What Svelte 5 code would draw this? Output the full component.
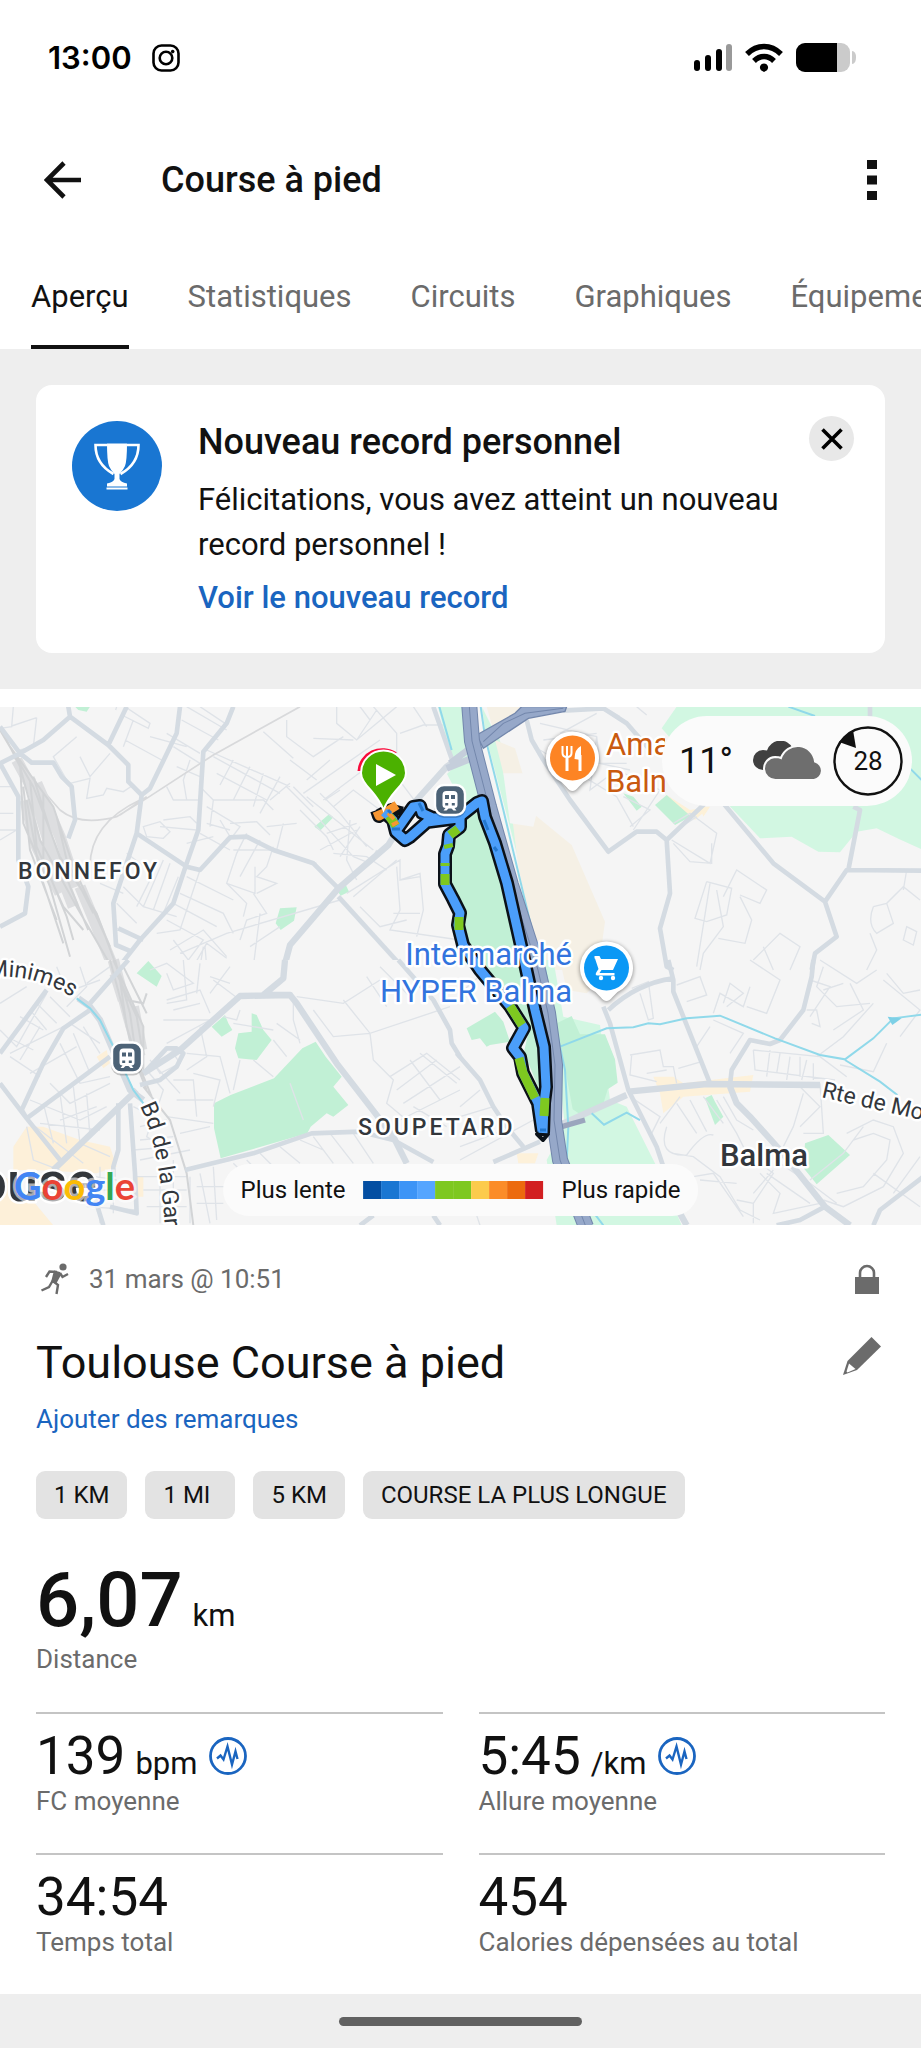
<script lang="ts">
    const tabs = ["Aperçu", "Statistiques", "Circuits", "Graphiques", "Équipement"];
    let activeTab = "Aperçu";
    let showRecord = true;

    const badges = ["1 KM", "1 MI", "5 KM", "COURSE LA PLUS LONGUE"];

    const stats = [
        { value: "139", unit: "bpm", label: "FC moyenne", chart: true },
        { value: "5:45", unit: "/km", label: "Allure moyenne", chart: true },
        { value: "34:54", unit: "", label: "Temps total", chart: false },
        { value: "454", unit: "", label: "Calories dépensées au total", chart: false },
    ];

    const paceColors = [
        "#034ea2", "#1976d2", "#3d94f6", "#55a5ff", "#7ec820",
        "#7ec820", "#fccb4d", "#fb8c28", "#ec6a0e", "#d21f21",
    ];

    const outbound = "M384 105L393 113L396 125L405 133L410 130L427 115L458 111L477 96L482 94L485 110L495 136L507 176L522 243L535 303L544 340L546 380L544 396L543 426";
    const loop = "M396 124L413 100L420 99L422 106L433 111L460 111L460 120L449 128L448 139L445 147L445 177L453 192L460 206L458 218L463 238L480 263L510 299L524 321L513 341L520 350L523 366L538 396L542 424";

    const greenParts = [
        "M458 122L450 128", "M445 156L445 159", "M445 167L445 178", "M459 210L459 223",
        "M510 299L522 318", "M519 351L523 366L535 391", "M545 391L544 409", "M389 109L396 119",
        "M448 137L449 141",
    ];
</script>

<div class="screen">
    <header>
        <div class="status">
            <time>13:00</time>
            <svg class="insta" viewBox="0 0 28 28" aria-hidden="true">
                <rect x="1.5" y="1.5" width="25" height="25" rx="8" />
                <circle cx="14" cy="14" r="6.3" />
                <circle class="dot" cx="20.7" cy="7.6" r="1.8" />
            </svg>
            <svg class="signals" viewBox="0 0 164 30" aria-hidden="true">
                <rect x="1" y="17" width="6" height="11" rx="3" />
                <rect x="12" y="12" width="6" height="16" rx="3" />
                <rect x="23" y="6" width="6" height="22" rx="3" />
                <rect x="33" y="1" width="6" height="27" rx="3" fill="#999" />
                <path d="M54 11C64 1 78 1 88 11M61 18C67 12 75 12 81 18" fill="none" stroke="#000" stroke-width="5.4" />
                <path d="M71 20.5a4 4 0 0 1 3 6.7L71 29l-3-1.800a4 4 0 0 1 3-6.700z" />
                <rect x="103" y="0" width="54" height="29" rx="9" fill="#cbcbcb" />
                <path d="M112 0h32v29h-32a9 9 0 0 1-9-9V9a9 9 0 0 1 9-9z" />
                <path d="M159 8q4 0 4 6.500t-4 6.500z" fill="#cbcbcb" />
            </svg>
        </div>

        <div class="appbar">
            <button class="icon-btn" aria-label="Retour">
                <svg width="38" height="38" viewBox="0 0 38 38" fill="none" stroke="#111" stroke-width="4.600">
                    <path d="M37 19H4M20 2L3 19l17 17" />
                </svg>
            </button>
            <h1>Course à pied</h1>
            <button class="icon-btn more" aria-label="Plus d'options">
                <svg width="10" height="40" viewBox="0 0 10 40" fill="#111">
                    <path d="M0 0h10v9H0zM0 15.500h10v9H0zM0 31h10v9H0z" />
                </svg>
            </button>
        </div>

        <nav class="tabs">
            {#each tabs as tab}
                <button class:active={tab === activeTab} on:click={() => (activeTab = tab)}>{tab}</button>
            {/each}
        </nav>
    </header>

    <section class="notice">
        {#if showRecord}
            <div class="card">
                <svg class="trophy" viewBox="0 0 90 90" aria-hidden="true">
                    <circle cx="45" cy="45" r="45" fill="#1976d2" />
                    <path d="M35 22.500h20q0 17-2 22.500-2 4.500-5.500 8v5q1 3 7.500 4.500v3H35v-3q6.500-1.500 7.500-4.500v-5q-3.500-3.500-5.500-8-2-5.500-2-22.500zM34.500 66.500h21v2h-21z" fill="#fff" />
                    <path d="M35 24H23.500q0 19 18 29M55 24h11.500q0 19-18 29" fill="none" stroke="#fff" stroke-width="2.600" />
                </svg>
                <div class="card-text">
                    <h2>Nouveau record personnel</h2>
                    <p>Félicitations, vous avez atteint un nouveau record personnel !</p>
                    <a href="#record">Voir le nouveau record</a>
                </div>
                <button class="close" aria-label="Fermer" on:click={() => (showRecord = false)}>
                    <svg width="22" height="22" viewBox="0 0 22 22" stroke="#000" stroke-width="3.600">
                        <path d="M1.500 1.500l19 19M20.500 1.500l-19 19" />
                    </svg>
                </button>
            </div>
        {/if}
    </section>

    <section class="map">
        <svg class="tiles" viewBox="0 0 921 518" role="img" aria-label="Carte du parcours">
            <defs>
                <clipPath id="left-half"><rect y="20" width="1381" height="760" /></clipPath>
                <clipPath id="label-clip"><rect x="590" y="0" width="75" height="110" /></clipPath>
                <path id="minimes" d="M-12 270Q18 268 42 276T84 299" />
                <path id="boulevard" d="M140 399Q163 444 167 560" />
            </defs>
            <rect width="921" height="518" fill="#f5f5f5" />

            <!-- north-west -->
            <g transform="translate(0 -7) scale(.33334)" fill="none">
                <g clip-path="url(#left-half)">
                    <path class="park" d="M225 20h45l-10 15-25-5zM943 380l45-38 12 10-40 40zM1010 570l25-20 12 25-25 12zM840 625l50-3-8 40-40 28-15-20zM420 800l20-16 25 20v10h-45z" />
                    <path class="minor" d="M40 20L35 80 0 85M35 78l75-25M350 20l-3 10M375 20l75 50-5 15-80-40M400 60L370 140M375 120l110 60M450 110l110 30M500 100l100 60M530 200l70 30M560 20l120 70M600 20l75 50M545 60l110 60M520 140l80 50M620 150l250 110M640 170l200 110M650 220l150 80M700 180l-40 75M750 200l-50 100M790 220l-30 100M840 230L780 340M600 260l40 40 150 0 30 30M500 260l20 40 80 0M570 180l-20 60 10 60M620 320l100 60-30 40M640 300l-10 80M860 260l90 90 110 120M880 260l60 60M920 290l200 160M900 330l80 80 20 40M960 280l60 60 80 100M970 300l120-90M1000 320l60-50 80 60M1020 270l-45 30M870 250l-60 50M1010 20v50l60 50 120-100M1080 20l30 40M1120 20l70 80v60M1070 120l60-90M860 60v50l80 60 90-60M940 115l120 5M790 95l90 80M870 180l80 60M910 280l230-160M1200 100l70-25h60M1190 100v130l60 80M1240 20l40 60M920 240l70-60M110 53L100 140 60 150M210 250l60-15-10 60 50-10 10-20 50 10 30-20M240 170l30 60 60-70M200 240l-40-70 70-60M0 260h45M0 340h40M0 420l50-30M0 390h50M380 460l80 60-50 100M400 480l-40 60M430 620l60-140M460 630l50-140M490 640l45-110M430 380l50-15 30 30-20 20-50-5zM490 360l80-10 20 20M480 380l110 10M560 430l80-20M600 400l90 50M620 370l70 20M660 360l30 50M740 400l-30 60-30 90 85 30 0-80M780 420l-60 110M820 440l-20 60-30 30 60 20-60 30M700 450l120 0M830 450l120 40M760 580l40 60-60 20-20 60M680 550l60 60-10 40M540 580l130 60 30 60M520 610l130 70M560 530l140 70M600 510l-60 180-70 10M500 660l110 60-60 80M690 370l80-5 40 40M850 370l-20 80M800 380l90-10M960 450l110-60M980 400l90-30M1000 460l100 10 60 40M1050 360l-10 120 30 60M1080 380l-60 90M1060 470l50 20 20-40M1020 600L680 700 540 760M1040 580l160-100 0 60 60-20 10 110-20 80M1060 590l130-110M1190 500l10 130-30 60 210 30M1200 540l60-10M1080 620l60 60 80-20M1180 640h80M300 550l70 30M370 560l60 60 100 30M350 610l60 60M340 680l80 40M510 750l100-60 70 80M580 800l40-70 60 45M600 800l10-60M620 800l-5-60M520 720l60 80M780 640l-20 160M840 680l-90 60" />
                    <path class="rail" d="M900 20L640 165 440 295 350 350Q240 380 180 330L40 170M420 300Q270 370 270 500M440 290L360 345" />
                    <path class="yard wide" d="M90 240L150 440 220 620M75 300L110 440 180 580M110 250L180 410 230 560M50 180L110 290M240 560L290 680 335 790" />
                    <path class="yard" d="M10 100L60 200 120 420 230 620 340 810M0 90L100 260 180 470 290 640 350 800M30 140L160 320 220 500 330 740M60 190L70 370 150 560 210 770M90 240L110 440 190 620 250 690M130 280L130 480 200 650 220 720M100 230L150 390 210 560 265 690M70 260L90 450 170 660M170 350L200 480 280 640M80 300L120 520 190 730" />
                    <path class="road" d="M0 190L60 160 130 120 210 50 205 20M210 50L325 135 385 195 385 245 425 285M325 135L380 20M0 80L60 160 95 188 160 188 185 230 215 260 225 360 205 415M0 190L55 290 55 480 85 560 75 640 0 680M540 20L530 100 450 265 425 285 410 400 340 610 348 735 395 755M410 400L560 500 600 510 690 412 740 410 820 450 940 490 1015 565M700 20L680 70 610 155 595 390 560 490 520 610 420 720 350 810M355 685L430 720" />
                    <path class="road" d="M1370 180L1340 200 1250 300 1165 435 1015 565 870 735 850 810" stroke-width="20" />
                    <path class="road" d="M1015 590L1215 810" />
                </g>
            </g>

            <!-- green belt between the canal and the motorway -->
            <path class="park pale" d="M438 0H470L492 104L462 96L447 67L454 60zM482 0l4 30 20 75 26 100 10 58h14l-17-60-22-80-14-60 3-8-8-28-6-7z" />
            <path class="park" d="M457 132L470 108 482 104 495 140 523 262 538 300 543 345 540 385 524 345 530 318 506 285 466 235 464 205 448 176 452 138z" />

            <!-- north-east -->
            <g transform="translate(460 -7) scale(.33334)" fill="none">
                <path class="park pale" d="M650 20h740v430q-70-30-140-65l-60 10-50 62-65-2-80-45-95 5-85-90-210-240z" />
                <path class="park" d="M585 315l35-30 80 60-55 30zM490 280l30 10 25 30-15 12z" />
                <path class="sand" d="M80 20h110l-90 70zM105 120l60 25 60 200 110 90 100 230-20 145H240L175 500 150 300z" />
                <path fill="#f5f5f5" d="M130 220l70 0 40 80-20 80-70-10z" />
                <path fill="#fdf1d8" d="M620 285l70 45 60-10-45 40zM720 320h30l-20 30z" />
                <path class="minor" d="M240 70l170 40 10 80 90 20M250 120l160-20M410 40l-110 60M430 20l50 30M530 20l30 25M240 150l230 140 50 90M410 110l-20 160 80-60 130 60-80 120M380 190l120 0M490 290l80 40-60 50M640 370l50-30 80 60-20 90-115-70M650 390l60-40M640 430l50 55 65 5v-60M740 545l75 20-15 80-60 20-35-10 35-110M790 590l40-80 90 60-20 40-60-25M750 550l-40 250M770 570l20 110-60 80-10 50M840 590l35 70-20 70-80-15M880 780l80-80 60 40-30 70M910 740l30 70M1240 620l40-10 50-50 50 40M1240 620q-20 50 10 80l50-30-20-60M1340 680l30 15-10 40-30-15zM1330 570l10-60M1230 700l20 50-30 60" />
                <path class="road" d="M200 60L215 120 250 180 330 300 445 455 530 395 590 395 620 420 735 310M620 420L630 580 600 685 620 800 640 810M310 32L430 25 500 70 570 150M790 310L940 490 1095 605 1160 510 1390 512M1165 510L1200 330 1180 320M1095 605L1130 710 1065 760 1055 810M-80 20L-20 190" />
                <path class="road" d="M1230 20v30" />
                <path class="water" d="M-62 20L-25 150M62 20L75 110 130 330 240 790M985 20L1065 48M1350 205l35 35" />
                <path class="ramp" d="M-30 190L30 145M-40 205L35 175" />
                <path d="M50 105L165 40 185 20H320L315 34 205 55 70 145z" fill="#96a8c9" stroke="#7387ac" stroke-width="4" />
                <path d="M70 125L130 70 195 40 310 25" stroke="#7387ac" stroke-width="3" />
            </g>

            <!-- south-west -->
            <g transform="translate(0 253) scale(.33334)" fill="none">
                <path fill="#fdf0d9" d="M80 500h50l110 40 90 20 20 60-60 20-190-10H40v-70zM0 640l80 60 80 96H0zM290 290l30-20 10 40-20 15zM400 650h30v60h-30z" />
                <path class="park" d="M410 40l35-37 40 45-15 32zM635 200l40-35 10 25 12 20-32 20zM715 220l40-5 0-55 15 5 20 45 25 30-45 60-55-5-10-30zM642 430l50-25 130-50 85-90 40-20 30 45 48 60-25 30 45 55-45 35-20-10-48 40-10 20-260 75-20-90z" />
                <path class="minor" d="M0 130l80-50M0 210l50 50 90-160M40 240l60 30M60 170l70 40M90 150l50 60M110 130l60 60M150 110l60 60M30 280l180-90M60 300l60-100M90 340l140-80M120 350l-90-60M150 370l60 60 120-60M180 250l60 120 90-20M220 220l50 120M250 200l50 80M210 190l90 60M330 20l-70 50M300 60l-110 40M240 20l20 60-60 60M170 20l20 50M80 480l170 130M90 420l150 60 80-40M120 490l180 20M130 430l30 120M180 400l20 150M220 380l20 170M260 400l10 130M290 440l-110 40M80 500l20 100 80 30M240 550l90 40M220 640l130 20M250 690l140 0M260 740l150 10M300 620v170M340 610v150M420 600l150-30M400 570l120-10M420 540l100-10M420 500l80-20M410 650h150M430 690h130M440 740h120M480 620v170M520 600v190M570 650v140M600 640l30 150M640 620l10 160M590 680h110M590 730h80M700 610l60 60M740 600l60 60M780 580l50 50M840 560l60 50M900 540l70 30M940 530l60 80M990 520l70 90M1060 520l60 90M450 30l50-20 80 60-60 20-20-50M500 120l100-30 30 70M520 150l80-20M490 180l140 0M500 250l130-70M560 280l100 10 30 110M600 200l20 90-60 40M580 340l80 20-20 80M520 360l60 0 10 110M530 420l110 0M500 470l140 20M540 520l90-20M670 170l40 10 10-30M700 190l120 20M830 190l70 50M820 240l40 50M720 300l-20 90M760 300l60 50M690 20l-60 80M640 60l80 60M880 120v60l20 70M890 110l140 20 110-70M1030 120l80 100 240-80M940 150l60 80 110-10M1100 50l60 90M1140 20l100 100M1110 220l10 80 60 60-20 70 60 50M1170 350l110-70 100 80M1190 390l120-90M1210 430l170-110M1230 300l90 120M1260 280l110 90M1200 480l180-90M1240 440l100 60M870 370l40 110" />
                <path class="minor" d="M400 440l60 30-20 60 60 40M440 330l50 60-20 60M450 300l90 100M470 320l60-60M460 310l60-30 20 30-60 30zM550 0l10 120-60 10M600 10l-10 90M630 50l60 20" />
                <path class="yard wide" d="M340 0L385 170 420 290M400 140L425 270M345 40L370 120" />
                <path class="yard" d="M330 0L370 150 400 290 440 390M345 0L390 160 410 300 455 410M350 40L410 170 430 290M370 20L420 120 440 160M360 60L380 200 420 330M340 0L430 200 430 350M380 120L430 130 440 100M430 380L510 480 560 640 580 796" />
                <path class="road" d="M0 280L140 90M270 150L190 205 130 310 65 450 80 475 180 600M0 370L80 475 330 290M270 130L385 0M555 630L760 580 935 520 1080 515 1180 540 1300 606M355 430L355 570 340 620 340 650M390 430L405 640 410 760 330 740M280 700L310 796M440 330L500 265 530 265 550 280 530 320 480 360 420 375" />
                <path class="road" d="M235 115L270 140 300 180 390 390 430 420M160 630L410 390M430 340L540 270 720 108 870 105 790 105 850 55 855 0M870 105L890 130 1010 310 1180 530 1220 610" stroke-width="20" />
                <path class="road" d="M1195 0L1300 120 1350 210 1355 250 1380 290M1080 796l40-30M1320 796l-20-30" />
                <path class="water" d="M230 115L270 145 300 180 340 260 400 390 430 430" />
            </g>

            <!-- south-east -->
            <g transform="translate(460 253) scale(.33334)" fill="none">
                <path class="park pale" d="M250 0H280L310 170 420 195 450 420 500 440 590 620 665 796H290L260 600 315 500 290 280zM0 0H60L150 110 110 60z" />
                <path class="sand" d="M300 0h140v40l-60 60-60-10z" />
                <path class="park" d="M20 205l85-50 25 30 20 60-60 10-10 5-20-25-25 5zM290 190l45-22 25 55 75 0 30 75 8 70-30 20-15 50-60 30-30-20z" />
                <path class="park" d="M735 415l20-10 10 20 25 45-25 25zM1035 550l70-25 65 60-100 88-40-50z" />
                <path fill="#fdf1da" d="M580 350l60 0 30 20 210-25-10 50-200 15-60 50-10-60zM170 580h65l-10 30h-50z" />
                <path class="minor" d="M510 285l90-15 10 50 30 0 10 50M515 285l-5 60 80 20M655 325l70-20 10 40M560 340l60-10M515 85l50-20 15 110-15 5-25-80M650 75l70-25 20 55-60 20M790 130l20-60 40 30-50 40M760 160l20-60 70 40 20-60M870 0l90 60-40 100-60-20M1050 60l60 20-60 90M1040 150l30 0 10 50-25-10M1080 0l110 70 60-40M1090 90l60-20M1090 20l-20 60 60 60 100-10M1240 130l-90 100-80 60M1270 60l110 90-60 80M1280 40l50 60 50-10M1280 250l-40 85-100-20M1170 70l40 80-90 60M760 180l90 40-40 60M750 200l-40 60M880 270l5 60 240 30M930 270l-10 80M960 280l-10 60M990 290l-10 70M1020 290v60M1040 300l-15 60M1060 310l0 50M880 270l200 20 80 60M1020 380l60 60-60 60M1030 400l-30 100-30 60M1080 370l10 150-60 0M510 410l90 60-30 60M600 490l60-80M620 500q-30 90 60 85 50-70 80-60M650 430l60 90M690 420l50 95M730 410l60 80M790 410l40 70 50 30M770 420l60 100 30 60M640 580l60 10 80 60 60 100 60 30M700 650l60-10 90 130M860 580l80 60-60 90M900 640l60 60-20 60 140-30M920 640l130 90M960 610l90 60 80 60M880 700l60-70M1050 660l100-80 60-80M1160 520l80-40 60 20 30 80-60 100-120 60-60-20M1180 540l60-20 50 20-10 60-70 80-80 20M1240 640l140 100M1380 590l-80 110M0 100l90-80M0 440l60-50M0 470l100-30M0 600l220-120M0 560l160-60M0 690l60 60M60 796l-20-60M720 660l110 10M830 720l50 10 0 60" />
                <path class="road" d="M-10 280L60 360 100 440 140 500 190 560M100 606L240 545M430 140L450 190 505 390 590 560 610 620M445 150Q530 70 640 55M625 0L640 60 640 95 750 370M1060 0L1055 50 1030 150 960 240 930 252 870 240 815 330 810 375M1390 650L1260 750 1240 796M950 796L1020 780 1095 740" />
                <path class="road" d="M505 395L740 372 1080 375M810 380L830 430 870 470 960 570 1095 740 1170 796M660 760l20 36" stroke-width="19" />
                <path class="road" d="M310 490L500 405" stroke-width="22" />
                <path class="water" d="M250 0L300 260 315 330 325 500 320 606M300 260L440 205 520 202 565 190 600 193 680 175 780 167 945 235 1080 285 1155 298 1240 235 1300 175 1390 163M1155 300L1260 365 1312 405M395 460L432 494 500 458 540 480M380 730l50 66" />
                <path fill="#7dd0e6" d="M1283 170l42 5-28 20z" />
                <path stroke="#9ba5bd" stroke-width="16" d="M305 500L375 480" />
            </g>

            <path class="motorway edge" d="M469 -5L472 34L489 100L511 178L531 240L538 263L548 306L555 358L554 413L560 453L586 520" stroke-width="16" />
            <path class="motorway" d="M469 -5L472 34L489 100L511 178L531 240L538 263L548 306L555 358L554 413L560 453L586 520" stroke-width="14" />
            <path class="motorway edge" d="M469 -5L472 34L489 100L511 178L531 240L538 263L548 306L555 358L554 413L560 453L586 520" stroke-width="1" />

            <g class="route">
                <path class="casing" d="M377 103L379 109 388 104 396 102 397 98" />
                <path class="casing" d={loop} />
                <path class="casing" d={outbound} />
                <path class="casing tip" d="M537 427h11l-5 6z" />
                <path class="line orange" d="M377 104L379 109 386 105 394 100 397 98" />
                <path class="line" d={loop} />
                <path class="line" d={outbound} />
                {#each greenParts as part}
                    <path class="line green" d={part} />
                {/each}
                <path class="line orange thin" d="M388 106l6 6M392 118l6-3" />
                <path class="line deep" d="M388 103l3 3M392 122l8 0M419 96l4 8M540 423h6M484 113l4 10M494 140l3 4" />
            </g>

            <!-- start and finish pins -->
            <path d="M359.500 64a23 22 0 0 1 36-17" fill="none" stroke="#f80b3b" stroke-width="4" />
            <path d="M383.500 103Q380 94 371 83.500 361 73 361 66a22.500 22.500 0 0 1 45 0q0 7-10 17.500-9 10.500-12.500 19.500z" fill="#4bb100" stroke="#fff" stroke-width="2" />
            <path d="M376 57v22l20-11z" fill="#fff" />

            {#each [[450, 93], [127, 350.5]] as [x, y]}
                <g transform="translate({x} {y})">
                    <rect x="-16" y="-15" width="32" height="33" rx="10" fill="#0003" />
                    <rect x="-15" y="-15" width="30" height="30" rx="9" fill="#4c6276" stroke="#fff" stroke-width="2.400" />
                    <path d="M-7.500-5q0-4 4-4h7q4 0 4 4v10q0 3-3 3l2 2.500h-3l-2-2h-3l-2 2h-3l2-2.500q-3 0-3-3z" fill="#fff" />
                    <path d="M-5-5h4v4h-4zM1-5h4v4H1zM-4.800 3h3v2.500h-3zM1.800 3h3v2.500h-3z" fill="#4c6276" />
                </g>
            {/each}

            {#each [[572.500, 51, "#fd8424"], [606.500, 261, "#0b98f5"]] as [x, y, color]}
                <g transform="translate({x} {y})">
                    <path class="pin" d="M0 33q-3 0-6-4l-5-5a26.500 26.500 0 1 1 22 0l-5 5q-3 4-6 4z" />
                    <circle r="22.500" fill={color} />
                </g>
            {/each}
            <g transform="translate(572.500 51)" fill="none" stroke="#fff" stroke-width="2">
                <path d="M-10-12v7q0 4 4.500 4t4.500-4v-7M-5.500-12v12" />
                <path d="M-5.500-2v15M7.500-3v16" stroke-width="3" />
                <path d="M8.500 2V-12Q2-9 2 1z" fill="#fff" stroke="none" />
            </g>
            <g transform="translate(606.500 261)" fill="#fff">
                <path d="M-12-12h5l1.500 3h17l-5 11H-5l-2 3H8v2.500H-9q-3 0-1-3.500l2-3-3.500-10.500H-12z" />
                <circle cx="-5.500" cy="10" r="2.200" />
                <circle cx="6.500" cy="10" r="2.200" />
            </g>

            <g class="labels">
                <text class="district" x="18" y="172">BONNEFOY</text>
                <text class="district" x="358" y="428">SOUPETARD</text>
                <text class="town" x="720" y="459">Balma</text>
                <text class="city" x="97" y="494" text-anchor="end">Toulouse</text>
                <text class="shop" x="572" y="258" text-anchor="end">Intermarché</text>
                <text class="shop" x="572" y="295" text-anchor="end">HYPER Balma</text>
                <g clip-path="url(#label-clip)">
                    <text class="food" x="606" y="48">Amazonia</text>
                    <text class="food" x="606" y="85">Balnéa</text>
                </g>
                <text class="street"><textPath href="#minimes">Minimes</textPath></text>
                <text class="street"><textPath href="#boulevard">Bd de la Gare</textPath></text>
                <text class="street" transform="translate(821 390) rotate(13)">Rte de Mons</text>
            </g>
        </svg>

        <div class="weather">
            <span>11°</span>
            <svg width="70" height="40" viewBox="0 0 70 40" aria-hidden="true">
                <path d="M10 29a10 10 0 0 1 0-20q2 0 4 .500a14 14 0 0 1 26-2L36 26z" fill="#404040" />
                <path d="M23 39a11.500 11.500 0 0 1-1-23q4 0 6 1a17.500 17.500 0 0 1 34 3.500 9.500 9.500 0 0 1-1 18.500z" fill="#6e6e6e" stroke="#fbfbfb" stroke-width="2" />
            </svg>
            <div class="wind">
                <svg viewBox="0 0 70 70" aria-hidden="true">
                    <circle cx="35" cy="35" r="33.500" fill="none" stroke="#111" stroke-width="2.400" />
                    <path d="M6 16L20 4l3 18z" fill="#111" />
                </svg>
                <span>28</span>
            </div>
        </div>

        <div class="google" aria-label="Google">
            <span class="b">G</span><span class="r">o</span><span class="y">o</span><span class="b">g</span><span class="g">l</span><span class="r">e</span>
        </div>

        <div class="legend">
            <span>Plus lente</span>
            <div class="scale">
                {#each paceColors as color}
                    <i style="background: {color}"></i>
                {/each}
            </div>
            <span>Plus rapide</span>
        </div>
    </section>

    <main>
        <div class="meta">
            <svg class="runner" viewBox="0 0 30 32" aria-hidden="true">
                <circle cx="23" cy="4" r="3.600" fill="#6b6b6b" />
                <path d="M18.500 9.500L13 18l5 4-1.500 9M12.500 18L9 24 1.500 27.500M17 9L9.500 8.500 6 14M20 10l2.500 4 5.500-3" fill="none" stroke="#6b6b6b" stroke-width="2.400" />
                <path d="M14 7.500l6 1.500 1 3-5 9-5-2z" fill="#6b6b6b" />
            </svg>
            <span>31 mars @ 10:51</span>
            <svg class="lock" viewBox="0 0 24 30" aria-hidden="true">
                <path d="M0 13h24v17H0z" fill="#6b6b6b" />
                <path d="M5 14V9a7 7 0 0 1 14 0v5" fill="none" stroke="#6b6b6b" stroke-width="2.600" />
            </svg>
        </div>

        <div class="title">
            <h2>Toulouse Course à pied</h2>
            <button class="icon-btn" aria-label="Modifier">
                <svg width="38" height="38" viewBox="0 0 38 38">
                    <path d="M28.500 0L38 9.500 14 33 0 38 4.500 24z" fill="#6b6b6b" />
                    <path d="M6 26.500l6.500 5.500-8 3.500-1-1z" fill="#fff" />
                </svg>
            </button>
        </div>
        <a class="remarks" href="#remarques">Ajouter des remarques</a>

        <div class="badges">
            {#each badges as badge}
                <span>{badge}</span>
            {/each}
        </div>

        <div class="distance">
            <p><strong>6,07</strong><span>km</span></p>
            <small>Distance</small>
        </div>

        <div class="stats">
            {#each stats as stat}
                <div class="stat">
                    <p>
                        {stat.value}
                        {#if stat.unit}<span>{stat.unit}</span>{/if}
                        {#if stat.chart}
                            <svg viewBox="0 0 38 38" fill="none" stroke="#1a65c0" aria-hidden="true">
                                <circle cx="19" cy="19" r="17.500" stroke-width="2.800" />
                                <path d="M8 21.500l3.500-3 3 4 4-13 4.500 18 3.500-13 2 7.500" stroke-width="2.400" />
                            </svg>
                        {/if}
                    </p>
                    <small>{stat.label}</small>
                </div>
            {/each}
        </div>
    </main>

    <footer><div class="handle"></div></footer>
</div>

<style>
    :global(body) {
        background: #eee;
    }

    .screen {
        font-family: Roboto, "Noto Sans", sans-serif;
        color: #111;
        background: #fff;
        overflow: hidden;
    }

    h1,
    h2,
    p {
        margin: 0;
        font-weight: 500;
    }

    a {
        color: #1a65c0;
        text-decoration: none;
    }

    button {
        font: inherit;
        color: inherit;
        background: none;
        border: none;
        padding: 0;
        cursor: pointer;
    }

    svg {
        display: block;
        flex: none;
    }

    .status {
        display: flex;
        align-items: center;
        height: 116px;
        padding: 0 64px 0 48px;
    }

    .status time {
        font: 600 31px/40px Inter, sans-serif;
        color: #000;
    }

    .insta {
        width: 28px;
        height: 28px;
        margin-left: 20px;
        fill: none;
        stroke: #000;
        stroke-width: 2.6;
    }

    .insta .dot {
        fill: #000;
        stroke: none;
    }

    .signals {
        width: 164px;
        height: 30px;
        margin-left: auto;
    }

    .appbar {
        display: flex;
        align-items: center;
        height: 128px;
        padding: 0 44px;
    }

    .appbar h1 {
        margin-left: 79px;
        font-size: 36px;
    }

    .more {
        margin-left: auto;
    }

    .tabs {
        display: flex;
        height: 105px;
        padding: 0 31px;
        gap: 59px;
    }

    .tabs button {
        flex: none;
        padding-top: 4px;
        font-size: 31px;
        color: #6b6b6b;
        border-bottom: 4px solid transparent;
    }

    .tabs .active {
        color: #111;
        border-color: #111;
    }

    .notice {
        background: #eee;
        padding: 36px;
    }

    .card {
        display: flex;
        align-items: flex-start;
        background: #fff;
        border-radius: 16px;
        padding: 36px;
    }

    .trophy {
        width: 90px;
        height: 90px;
    }

    .card-text {
        flex: 1;
        margin: 0 8px 0 36px;
    }

    .card h2 {
        font-size: 36px;
        line-height: 42px;
    }

    .card p {
        font-size: 31px;
        font-weight: 400;
        line-height: 45px;
        margin: 14px 0 12px;
    }

    .card a {
        display: block;
        font-size: 31px;
        font-weight: 500;
        line-height: 38px;
    }

    .close {
        display: grid;
        place-items: center;
        width: 45px;
        height: 45px;
        margin: -5px -5px 0 0;
        border-radius: 50%;
        background: #e8e8e8;
    }

    .map {
        position: relative;
        margin-top: 18px;
    }

    .tiles {
        width: 100%;
        height: auto;
    }

    .park {
        fill: #c1f0d5;
    }

    .pale {
        fill: #d2f7e2;
    }

    .sand {
        fill: #f5f0e5;
    }

    .minor {
        stroke: #dfe3e8;
        stroke-width: 4;
    }

    .road {
        stroke: #d4dbe2;
        stroke-width: 14;
        stroke-linejoin: round;
    }

    .road[stroke-width="19"],
    .road[stroke-width="20"],
    .road[stroke-width="22"] {
        stroke-width: 19;
    }

    .rail {
        stroke: #d8d9db;
        stroke-width: 5;
    }

    .yard {
        stroke: #d2d4d6;
        stroke-width: 6;
    }

    .yard.wide {
        stroke: #dddee0;
        stroke-width: 34;
    }

    .water {
        stroke: #90d9ea;
        stroke-width: 6;
    }

    .ramp {
        stroke: #c5cedb;
        stroke-width: 20;
    }

    .motorway {
        fill: none;
        stroke: #96a8c9;
    }

    .motorway.edge {
        stroke: #7387ac;
    }

    .route path {
        fill: none;
        stroke-linejoin: round;
    }

    .casing {
        stroke: #0b1118;
        stroke-width: 14;
    }

    .casing.tip {
        stroke-width: 4;
    }

    .line {
        stroke: #4b9efa;
        stroke-width: 9;
    }

    .orange {
        stroke: #f79632;
    }

    .orange.thin {
        stroke-width: 4;
    }

    .green {
        stroke: #7ec820;
    }

    .deep {
        stroke: #2478cf;
        stroke-width: 3;
    }

    .pin {
        fill: #fff;
        filter: drop-shadow(0 1px 2px #0007);
    }

    .labels text {
        fill: #33373c;
        stroke: #fff;
        stroke-width: 5px;
        stroke-linejoin: round;
        paint-order: stroke;
    }

    .labels .district {
        font-size: 23px;
        font-weight: 500;
        letter-spacing: 3px;
    }

    .labels .town {
        font-size: 31px;
        font-weight: 500;
    }

    .labels .city {
        font-size: 56px;
        font-weight: 500;
    }

    .labels .shop {
        font-size: 31px;
        fill: #3274de;
    }

    .labels .food {
        font-size: 31px;
        fill: #c95a10;
    }

    .labels .street {
        font-size: 23px;
    }

    .weather {
        position: absolute;
        top: 9px;
        right: 9px;
        display: flex;
        align-items: center;
        height: 90px;
        padding: 0 9px 0 17px;
        border-radius: 45px;
        background: #fbfbfb;
        font-size: 36px;
    }

    .weather > svg {
        margin: 0 10px 0 20px;
    }

    .wind {
        display: grid;
        place-items: center;
        width: 70px;
        height: 70px;
        font-size: 26px;
    }

    .wind > * {
        grid-area: 1 / 1;
    }

    .google {
        position: absolute;
        left: 14px;
        bottom: 17px;
        display: flex;
        font: 700 38px/46px Lato, sans-serif;
        -webkit-text-stroke: 5px #fff9;
        paint-order: stroke fill;
    }

    .b {
        color: #4285f4;
    }

    .r {
        color: #ea4335;
    }

    .y {
        color: #fbbc05;
    }

    .g {
        color: #34a853;
    }

    .legend {
        position: absolute;
        bottom: 9px;
        left: 50%;
        transform: translateX(-50%);
        display: flex;
        align-items: center;
        gap: 18px;
        height: 52px;
        padding: 0 18px;
        border-radius: 26px;
        background: #fbfbfb;
        font-size: 24px;
        white-space: nowrap;
    }

    .scale {
        display: flex;
        height: 18px;
    }

    .scale i {
        width: 18px;
    }

    main {
        padding: 36px 36px 0;
    }

    .meta {
        display: flex;
        align-items: center;
        height: 36px;
        padding: 0 6px 0 4px;
        font-size: 26px;
        color: #6b6b6b;
    }

    .runner {
        width: 30px;
        height: 32px;
        margin-right: 19px;
    }

    .lock {
        width: 24px;
        height: 30px;
        margin-left: auto;
    }

    .title {
        display: flex;
        align-items: flex-start;
        justify-content: space-between;
        margin-top: 32px;
        padding: 8px 4px 0 0;
    }

    .title h2 {
        font-size: 45px;
        font-weight: 400;
        line-height: 52px;
    }

    .remarks {
        display: block;
        margin-top: 14px;
        font-size: 26px;
        line-height: 32px;
    }

    .badges {
        display: flex;
        gap: 18px;
        margin: 36px 0 41px;
    }

    .badges span {
        box-sizing: border-box;
        min-width: 90px;
        padding: 0 18px;
        border-radius: 9px;
        background: #e3e3e3;
        font-size: 24px;
        line-height: 48px;
    }

    .distance p {
        display: flex;
        align-items: baseline;
        gap: 10px;
        line-height: 80px;
        font-weight: 400;
    }

    .distance strong {
        font-size: 76px;
        font-weight: 500;
    }

    p span {
        font-size: 31px;
        line-height: 36px;
    }

    small {
        display: block;
        font-size: 26px;
        line-height: 30px;
        color: #6b6b6b;
    }

    .distance small {
        margin: 4px 0 38px;
    }

    .stats {
        display: grid;
        grid-template-columns: 1fr 1fr;
        column-gap: 36px;
    }

    .stat {
        border-top: 2px solid #c4c4c4;
        padding: 12px 0 37px;
    }

    .stat p {
        display: flex;
        align-items: baseline;
        gap: 10px;
        font-size: 53px;
        font-weight: 400;
        line-height: 60px;
    }

    .stat p svg {
        align-self: center;
        width: 38px;
        height: 38px;
        margin-left: 2px;
    }

    footer {
        background: #eee;
        padding: 23px 0 22px;
    }

    .handle {
        width: 243px;
        height: 9px;
        margin: 0 auto;
        border-radius: 5px;
        background: #616161;
    }
</style>
